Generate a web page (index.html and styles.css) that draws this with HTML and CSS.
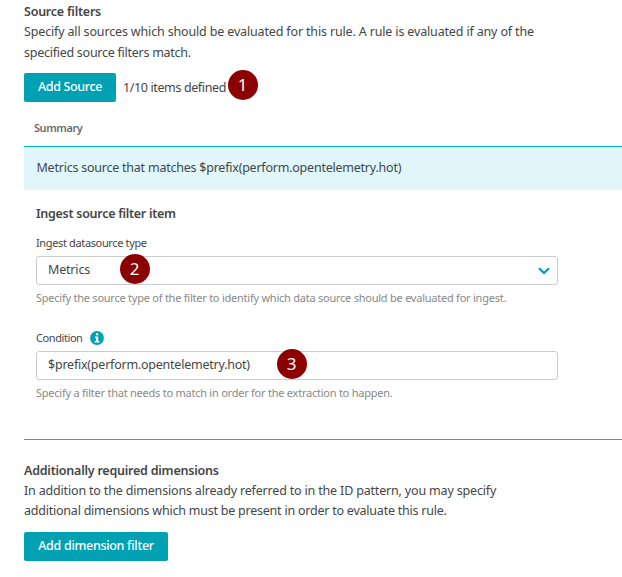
FILE: index.html
```
<!DOCTYPE html>
<html lang="en">
<head>
<meta charset="utf-8">
<title>Source filters</title>
<link rel="stylesheet" href="styles.css">
</head>
<body>
<main class="page">
  <section class="sources">
    <h2 class="title">Source filters</h2>
    <p class="text"><span class="line wide">Specify all sources which should be evaluated for this rule. A rule is evaluated if any of the</span><span class="line">specified source filters match.</span></p>
    <div class="actions">
      <button class="button add-source" type="button">Add Source</button>
      <span class="count">1/10 items defined<span class="badge badge-one">1</span></span>
    </div>
    <div class="summary-head">Summary</div>
    <div class="summary-row">Metrics source that matches $prefix(perform.opentelemetry.hot)</div>
    <div class="details">
      <h3 class="title subtitle">Ingest source filter item</h3>
      <div class="label">Ingest datasource type</div>
      <div class="field"><span class="value-short">Metrics</span>
        <svg class="chevron" width="12" height="8" viewBox="0 0 12 8"><path d="M1 1.2 6 6 11 1.2" fill="none" stroke="#00a1b2" stroke-width="2.2"/></svg>
        <span class="badge badge-two">2</span>
      </div>
      <p class="help">Specify the source type of the filter to identify which data source should be evaluated for ingest.</p>
      <div class="label condition"><span>Condition</span>
        <svg width="14" height="14" viewBox="0 0 14 14"><circle cx="7" cy="7" r="6.9" fill="#00a1b2"/><path d="M5.9 2.3h2.3v1.9H5.9zM4.9 5.4h3.3v4.7h1.2v1.4H4.7v-1.4h1.2V6.8h-1z" fill="#fff"/></svg>
      </div>
      <div class="field"><span>$prefix(perform.opentelemetry.hot)</span><span class="badge badge-three">3</span></div>
      <p class="help">Specify a filter that needs to match in order for the extraction to happen.</p>
    </div>
  </section>
  <section class="dimensions">
    <h2 class="title additional">Additionally required dimensions</h2>
    <p class="text dimension-text"><span class="line wide">In addition to the dimensions already referred to in the ID pattern, you may specify</span><span class="line second">additional dimensions which must be present in order to evaluate this rule.</span></p>
    <button class="button add-dimension" type="button">Add dimension filter</button>
  </section>
</main>
</body>
</html>
```
FILE: styles.css
```
* { box-sizing: border-box; }
body {
  margin: 0;
  background: #fff;
  color: #454646;
  font: 12.5px/20px "Noto Sans", sans-serif;
  letter-spacing: -0.23px;
}
h2, h3, p { margin: 0; }
.page { padding: 2px 0 0 24px; white-space: nowrap; }
.title { font-size: 12.5px; line-height: 19px; font-weight: 600; letter-spacing: -0.23px; }
.line { display: block; line-height: 21px; letter-spacing: -0.26px; }
.wide { letter-spacing: -0.155px; }
.actions { display: flex; align-items: center; gap: 7px; margin-top: 10px; }
.button {
  display: block;
  height: 29px;
  padding: 0 0 2px;
  border: 0;
  border-radius: 2px;
  background: #00a1b2;
  color: #fff;
  font: 500 12.5px/27px "Noto Sans", sans-serif;
}
.add-source { width: 92px; letter-spacing: -0.34px; }
.add-dimension { width: 144px; margin-top: 11px; letter-spacing: -0.3px; }
.count { position: relative; letter-spacing: -0.38px; }
.badge {
  position: absolute;
  width: 30px;
  height: 30px;
  border-radius: 50%;
  background: #8b0000;
  color: #fff;
  font: 17px/29px "Noto Sans", sans-serif;
  letter-spacing: 0;
  text-align: center;
}
.badge-one { left: 104.5px; top: -8px; }
.badge-two { left: 82.5px; top: -3.5px; }
.badge-three { left: 239.5px; top: -3.5px; }
.summary-head {
  height: 45px;
  padding: 16px 0 0 10px;
  border-bottom: 1px solid #00b9cc;
  color: #6d6d6d;
  font-size: 11px;
  font-weight: 600;
  letter-spacing: -0.44px;
}
.summary-row { height: 43px; padding-left: 12.5px; background: #e0f6fa; line-height: 41px; }
.details { width: 534px; height: 249px; padding: 14px 0 0 12px; }
.subtitle { letter-spacing: -0.28px; }
.label { margin-top: 10px; font-size: 11px; line-height: 20px; letter-spacing: -0.36px; }
.field {
  position: relative;
  display: flex;
  align-items: center;
  height: 29px;
  margin-top: 3px;
  padding: 0 8px 2px 11px;
  border: 1px solid #ccc;
  border-radius: 3px;
}
.value-short { letter-spacing: -0.18px; }
.chevron { margin: 3px -1px 0 auto; }
.help { margin-top: 3px; color: #898989; font-size: 11px; line-height: 20px; letter-spacing: -0.238px; }
.condition { display: flex; align-items: center; gap: 7px; margin-top: 20px; letter-spacing: -0.42px; }
.dimensions { padding-top: 21px; border-top: 1px solid #00b9cc; }
.dimension-text { padding-top: 1px; }
.dimension-text .line { line-height: 20px; }
.dimension-text .wide { letter-spacing: -0.175px; }
.dimension-text .second { letter-spacing: -0.225px; }
```
